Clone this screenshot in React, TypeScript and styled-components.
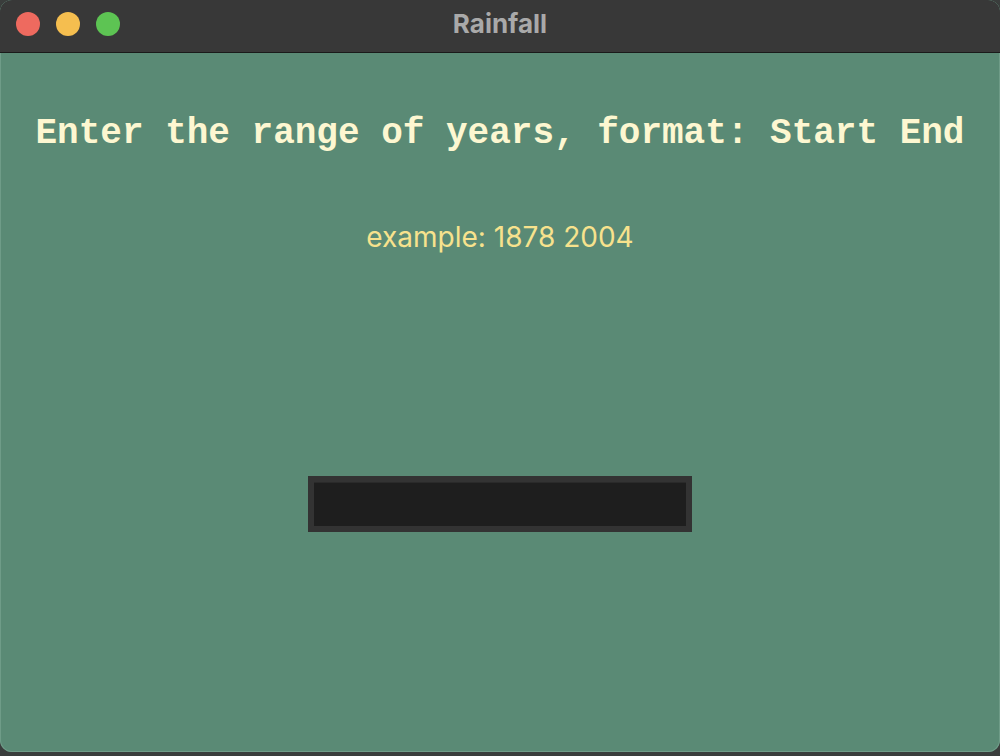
import React from "react";
import styled, { createGlobalStyle } from "styled-components";

const Global = createGlobalStyle`
  html, body { margin: 0; padding: 0; background: #3a3d3c; }
  #root { width: 1000px; height: 756px; }
`;

const Window = styled.div`
  width: 1000px;
  height: 752px;
  box-sizing: border-box;
  border-radius: 12px;
  overflow: hidden;
  display: flex;
  flex-direction: column;
  background: #5a8a75;
  box-shadow: inset 0 0 0 1px #6f9c88;
`;

const TitleBar = styled.div`
  position: relative;
  height: 52px;
  flex: none;
  background: #383838;
  border-bottom: 1px solid #1a1a1a;
  display: flex;
  align-items: center;
  justify-content: center;
`;

const Lights = styled.div`
  position: absolute;
  left: 16px;
  top: 12px;
  display: flex;
  gap: 16px;
`;

const Light = styled.span<{ $c: string }>`
  width: 24px;
  height: 24px;
  border-radius: 50%;
  background: ${(p) => p.$c};
`;

const Title = styled.div`
  font-family: "Inter", "Liberation Sans", Arial, sans-serif;
  font-weight: 700;
  font-size: 26px;
  color: #a9a9a9;
  margin-top: -6px;
`;

const Content = styled.div`
  flex: 1;
  display: flex;
  flex-direction: column;
  align-items: center;
`;

const Heading = styled.h1`
  margin: 60px 0 0;
  font-family: "Liberation Mono", "Courier New", monospace;
  font-weight: 700;
  font-size: 36px;
  line-height: 42px;
  color: #fdf7d1;
  white-space: nowrap;
`;

const Example = styled.div`
  margin-top: 65px;
  font-family: "Inter", "Liberation Sans", sans-serif;
  font-size: 28px;
  line-height: 34px;
  color: #f7e28d;
`;

const Input = styled.input`
  margin-top: 222px;
  width: 384px;
  height: 56px;
  box-sizing: border-box;
  border: 6px solid #333333;
  background: #1e1e1e;
  box-shadow: inset 0 1px 0 #2a2a2a;
  outline: none;
  color: #fff;
  padding: 0 8px;
`;

export default function App() {
  return (
    <>
      <Global />
      <Window>
        <TitleBar>
          <Lights>
            <Light $c="#ee6a5f" />
            <Light $c="#f5be4f" />
            <Light $c="#5dc453" />
          </Lights>
          <Title>Rainfall</Title>
        </TitleBar>
        <Content>
          <Heading>Enter the range of years, format: Start End</Heading>
          <Example>example: 1878 2004</Example>
          <Input type="text" />
        </Content>
      </Window>
    </>
  );
}
